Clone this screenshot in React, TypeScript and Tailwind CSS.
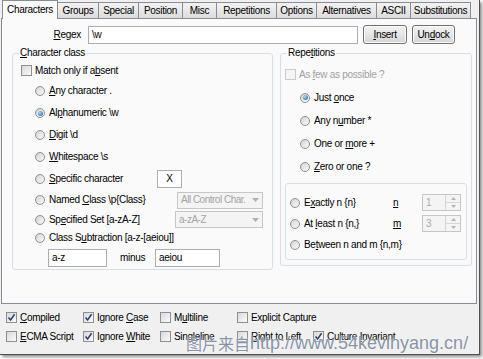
import React from "react";

const tabs = [
  { label: "Characters", w: "w-[56px]", on: true },
  { label: "Groups", w: "w-[42px]" },
  { label: "Special", w: "w-[41px]" },
  { label: "Position", w: "w-[45px]" },
  { label: "Misc", w: "w-[35px]" },
  { label: "Repetitions", w: "w-[61px]" },
  { label: "Options", w: "w-[41px]" },
  { label: "Alternatives", w: "w-[61px]" },
  { label: "ASCII", w: "w-[35px]" },
  { label: "Substitutions", w: "w-[61px]" },
];

function Acc({ t, i }: { t: string; i?: number }) {
  if (i === undefined) return <>{t}</>;
  return (
    <>
      {t.slice(0, i)}
      <span className="underline underline-offset-[1px]">{t[i]}</span>
      {t.slice(i + 1)}
    </>
  );
}

function Check({ on, disabled }: { on?: boolean; disabled?: boolean }) {
  return (
    <span
      className={
        disabled
          ? "flex h-[11px] w-[11px] shrink-0 items-center justify-center border border-[#cbcbcb] bg-[#f5f5f5]"
          : "flex h-[11px] w-[11px] shrink-0 items-center justify-center border border-[#8e8f8f] bg-gradient-to-br from-[#d9d9d9] to-[#fbfbfb]"
      }
    >
      {on && (
        <svg width="9" height="9" viewBox="0 0 9 9">
          <path d="M1.5 4.5 L3.6 7 L7.6 1.2" fill="none" stroke="#2c3e74" strokeWidth="1.5" />
        </svg>
      )}
    </span>
  );
}

function Radio({ on }: { on?: boolean }) {
  return (
    <span className="flex h-[10px] w-[10px] shrink-0 items-center justify-center rounded-full border border-[#8e8f8f] bg-gradient-to-br from-[#d4d4d4] to-[#fafafa]">
      {on && (
        <span className="h-[5px] w-[5px] rounded-full bg-[radial-gradient(circle_at_35%_35%,#9ed8f7,#1b5e9b)]" />
      )}
    </span>
  );
}

function RadioRow({ label, i, on, h }: { label: string; i?: number; on?: boolean; h: string }) {
  return (
    <div className={`flex items-center gap-[4px] ${h}`}>
      <Radio on={on} />
      <span>
        <Acc t={label} i={i} />
      </span>
    </div>
  );
}

function Button({ children, w }: { children: React.ReactNode; w: string }) {
  return (
    <div
      className={`flex h-[19px] items-center justify-center rounded-[3px] border border-[#707070] bg-gradient-to-b from-[#f3f3f3] via-[#e6e6e6] to-[#d4d4d4] shadow-[inset_0_0_0_1px_#fbfbfb] ${w}`}
    >
      {children}
    </div>
  );
}

function Combo({ text, w }: { text: string; w: string }) {
  return (
    <div className={`flex h-[17px] items-center border border-[#c6c6c6] bg-[#f4f4f4] text-[#a3a3a3] ${w}`}>
      <span className="flex-1 overflow-hidden whitespace-nowrap pl-[3px] tracking-[-0.5px]">{text}</span>
      <span className="flex w-[14px] shrink-0 items-center justify-center">
        <svg width="7" height="4" viewBox="0 0 7 4">
          <path d="M0 0 L7 0 L3.5 4 Z" fill="#b0b0b0" />
        </svg>
      </span>
    </div>
  );
}

function Spin({ v }: { v: string }) {
  return (
    <div className="flex h-[17px] w-[39px] border border-[#c6c6c6] bg-[#f4f4f4] text-[#a9a9a9]">
      <span className="flex-1 pl-[3px] leading-[15px]">{v}</span>
      <div className="flex w-[15px] flex-col border-l border-[#d6d6d6]">
        <span className="flex flex-1 items-center justify-center border-b border-[#d6d6d6]">
          <svg width="5" height="3" viewBox="0 0 5 3">
            <path d="M0 3 L5 3 L2.5 0 Z" fill="#b5b5b5" />
          </svg>
        </span>
        <span className="flex flex-1 items-center justify-center">
          <svg width="5" height="3" viewBox="0 0 5 3">
            <path d="M0 0 L5 0 L2.5 3 Z" fill="#b5b5b5" />
          </svg>
        </span>
      </div>
    </div>
  );
}

function Opt({ label, i, on }: { label: string; i?: number; on?: boolean }) {
  return (
    <div className="flex h-[19px] items-center gap-[3px]">
      <Check on={on} />
      <span className="whitespace-nowrap">
        <Acc t={label} i={i} />
      </span>
    </div>
  );
}

export default function App() {
  return (
    <div className="relative h-[359px] w-[483px] overflow-hidden bg-white font-['Liberation_Sans',Arial,sans-serif] text-[10px] leading-[12px] tracking-[-0.3px] text-black">
      <div className="flex h-[355px] w-[480px] flex-col border-r border-b border-[#505050] bg-[#f0f0f0] shadow-[2px_2px_3px_rgba(0,0,0,0.45)]">
        {/* Tabs */}
        <div className="relative z-10 flex h-[19px] items-end pl-[2px]">
          {tabs.map((t) =>
            t.on ? (
              <div
                key={t.label}
                className={`flex h-[19px] items-center justify-center border border-b-0 border-[#898c95] bg-[#fafafa] ${t.w}`}
              >
                {t.label}
              </div>
            ) : (
              <div
                key={t.label}
                className={`-ml-px mb-px flex h-[16px] items-center justify-center border border-b-0 border-[#898c95] bg-gradient-to-b from-[#f3f3f3] to-[#dcdcdc] ${t.w}`}
              >
                {t.label}
              </div>
            )
          )}
        </div>

        {/* Panel */}
        <div className="-mt-px ml-[1px] flex h-[286px] w-[476px] flex-col border border-[#898c95] bg-[#fafafa]">
          {/* Regex row */}
          <div className="mt-[6px] flex h-[19px] items-center">
            <span className="w-[80px] pr-[1px] text-right">
              <Acc t="Regex" i={0} />
            </span>
            <div className="ml-[6px] flex h-[18px] w-[270px] items-center border border-[#abadb3] bg-white pl-[3px]">
              \w
            </div>
            <div className="ml-[5px]">
              <Button w="w-[44px]">
                <Acc t="Insert" i={0} />
              </Button>
            </div>
            <div className="ml-[5px]">
              <Button w="w-[43px]">
                <Acc t="Undock" i={2} />
              </Button>
            </div>
          </div>

          <div className="mt-[3px] flex">
            {/* Character class */}
            <fieldset className="ml-[10px] h-[223px] w-[261px] rounded-[3px] border border-[#d5dfe5]">
              <legend className="ml-[6px] px-[1px] leading-[12px]">
                <Acc t="Character class" i={0} />
              </legend>
              <div className="flex flex-col pl-[8px]">
                <div className="mt-[4px] flex h-[15px] items-center gap-[3px]">
                  <Check />
                  <span>
                    <Acc t="Match only if absent" i={15} />
                  </span>
                </div>
                <div className="mt-[2px] flex flex-col pl-[14px]">
                  <RadioRow label="Any character ." i={0} h="h-[22px]" />
                  <RadioRow label="Alphanumeric \w" i={2} on h="h-[22px]" />
                  <RadioRow label="Digit \d" i={0} h="h-[22px]" />
                  <RadioRow label="Whitespace \s" i={0} h="h-[22px]" />
                  <div className="flex h-[22px] items-center">
                    <div className="w-[122px]">
                      <RadioRow label="Specific character" i={0} h="h-[22px]" />
                    </div>
                    <div className="flex h-[18px] w-[25px] items-center justify-center border border-[#abadb3] bg-white">
                      X
                    </div>
                  </div>
                  <div className="flex h-[20px] items-center">
                    <div className="w-[142px]">
                      <RadioRow label="Named Class \p{Class}" i={6} h="h-[20px]" />
                    </div>
                    <Combo text="All Control Char." w="w-[86px]" />
                  </div>
                  <div className="flex h-[19px] items-center">
                    <div className="w-[140px]">
                      <RadioRow label="Specified Set [a-zA-Z]" i={2} h="h-[19px]" />
                    </div>
                    <Combo text="a-zA-Z" w="w-[88px]" />
                  </div>
                  <RadioRow label="Class Subtraction [a-z-[aeiou]]" i={7} h="h-[18px]" />
                  <div className="mt-[1px] flex h-[19px] items-center pl-[13px]">
                    <div className="flex h-[18px] w-[59px] items-center border border-[#abadb3] bg-white pl-[3px]">
                      a-z
                    </div>
                    <span className="ml-[13px] w-[35px]">minus</span>
                    <div className="flex h-[18px] w-[65px] items-center border border-[#abadb3] bg-white pl-[3px]">
                      aeiou
                    </div>
                  </div>
                </div>
              </div>
            </fieldset>

            {/* Repetitions */}
            <fieldset className="ml-[7px] h-[219px] w-[192px] rounded-[3px] border border-[#d5dfe5]">
              <legend className="ml-[6px] px-[1px] leading-[12px]">
                <Acc t="Repetitions" i={4} />
              </legend>
              <div className="flex flex-col pl-[4px]">
                <div className="mt-[8px] flex h-[15px] items-center gap-[3px] text-[#a0a0a0]">
                  <Check disabled />
                  <span>
                    <Acc t="As few as possible ?" i={3} />
                  </span>
                </div>
                <div className="mt-[4px] flex flex-col pl-[15px]">
                  <RadioRow label="Just once" i={5} on h="h-[23px]" />
                  <RadioRow label="Any number *" i={5} h="h-[23px]" />
                  <RadioRow label="One or more +" i={7} h="h-[23px]" />
                  <RadioRow label="Zero or one ?" i={0} h="h-[23px]" />
                </div>
                <div className="mt-[5px] mr-[4px] flex h-[77px] flex-col rounded-[3px] border border-[#d5dfe5] pt-[8px] pl-[4px]">
                  <div className="flex h-[21px] items-center">
                    <div className="w-[103px]">
                      <RadioRow label="Exactly n {n}" i={1} h="h-[21px]" />
                    </div>
                    <span className="w-[29px] underline">n</span>
                    <Spin v="1" />
                  </div>
                  <div className="flex h-[21px] items-center">
                    <div className="w-[103px]">
                      <RadioRow label="At least n {n,}" i={3} h="h-[21px]" />
                    </div>
                    <span className="w-[29px] underline">m</span>
                    <Spin v="3" />
                  </div>
                  <RadioRow label="Between n and m {n,m}" i={2} h="h-[21px]" />
                </div>
              </div>
            </fieldset>
          </div>
        </div>

        {/* Options */}
        <div className="mt-[4px] grid grid-cols-[77px_77px_77px_76px_90px] pl-[6px]">
          <Opt label="Compiled" i={0} on />
          <Opt label="Ignore Case" i={7} on />
          <Opt label="Multiline" i={1} />
          <Opt label="Explicit Capture" />
          <div />
          <Opt label="ECMA Script" i={0} />
          <Opt label="Ignore White" i={7} on />
          <Opt label="Singleline" i={3} />
          <Opt label="Right to Left" i={0} />
          <Opt label="Culture Invariant" i={8} on />
        </div>
      </div>

      {/* watermark */}
      <div className="absolute left-[186px] top-[333px] flex items-center whitespace-nowrap leading-[20px] tracking-normal text-[#8794a8] [text-shadow:0_0_2px_#ffffff]">
        <span className="font-['Noto_Sans_CJK_SC',sans-serif] text-[16px]">图片来自</span>
        <span className="font-['Liberation_Sans',sans-serif] text-[18px]">http://www.54kevinyang.cn/</span>
      </div>
    </div>
  );
}
